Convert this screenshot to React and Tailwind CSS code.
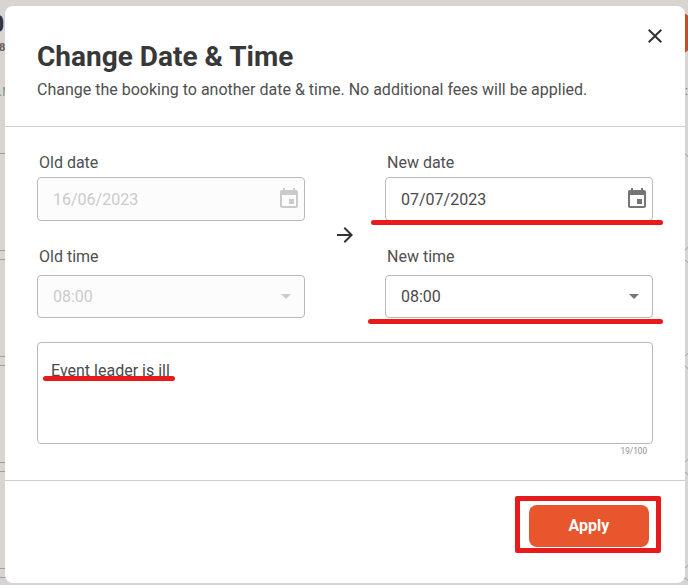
function CalendarIcon({ className }) {
  return (
    <svg viewBox="0 0 24 24" className={className} fill="currentColor">
      <path d="M17 12h-5v5h5v-5zM16 1v2H8V1H6v2H5c-1.11 0-1.99.9-1.99 2L3 19c0 1.1.89 2 2 2h14c1.1 0 2-.9 2-2V5c0-1.1-.9-2-2-2h-1V1h-2zm3 18H5V8h14v11z" />
    </svg>
  );
}

function CaretIcon({ className }) {
  return (
    <svg viewBox="0 0 10 5" className={className} fill="currentColor">
      <path d="M0 0h10L5 5z" />
    </svg>
  );
}

function DateField({ label, value, disabled }) {
  return (
    <div className="w-[268px]">
      <div className="pl-0.5 h-[30px] leading-[32px] text-[#4f4f4f]">{label}</div>
      <div
        className={
          "flex h-[44px] items-center justify-between rounded-[4px] border border-[#b9b9b9] pl-[15px] pr-[3px] " +
          (disabled ? "bg-[#fcfcfc] text-[#cbcbcb]" : "bg-white text-[#4a4a4a]")
        }
      >
        <span className="pt-0.5">{value}</span>
        <CalendarIcon className={disabled ? "size-6 text-[#cbcbcb]" : "size-6 text-[#757575]"} />
      </div>
    </div>
  );
}

function TimeField({ label, value, disabled }) {
  return (
    <div className="w-[268px]">
      <div className="pl-0.5 h-[34px] leading-[32px] text-[#4f4f4f]">{label}</div>
      <div
        className={
          "flex h-[43px] items-center justify-between rounded-[4px] border border-[#b9b9b9] pl-[15px] pr-[13px] " +
          (disabled ? "bg-[#fcfcfc] text-[#cbcbcb]" : "bg-white text-[#4a4a4a]")
        }
      >
        <span>{value}</span>
        <CaretIcon className={disabled ? "h-[5px] w-[10px] text-[#cbcbcb]" : "h-[5px] w-[10px] text-[#757575]"} />
      </div>
    </div>
  );
}

function PageBehind() {
  return (
    <div className="h-full w-[690px]">
      <div className="flex h-[153px] items-start justify-between">
        <div className="w-4">
          <div className="-ml-[9px] mt-[11px] h-[27px] text-[23px] font-bold leading-[28px] text-[#33303a]">0</div>
          <div className="h-[18px] -ml-[1px] text-[11px] font-bold leading-[20px] text-[#6b5b55]">8</div>
          <div className="-ml-[1px] mt-[27px] h-[18px] text-[12px] leading-[18px] text-[#6f9a96]">.M</div>
        </div>
        <div className="w-[14px]">
          <div className="mt-[13px] h-[40px] rounded-r-[8px] bg-[#c94e28]" />
          <div className="mt-[29px] pl-[9px] text-[12px] leading-[18px] text-[#77706e]">:</div>
        </div>
      </div>
      <div className="-ml-5 flex w-[710px] flex-col gap-2">
        {[0, 1, 2, 3, 4].map((row) => (
          <div key={row} className="h-[98px] shrink-0 rounded-[8px] border border-[#a39f9d]" />
        ))}
      </div>
    </div>
  );
}

export default function App() {
  return (
    <div className="relative h-[585px] w-[688px] overflow-hidden bg-[#d8d4d1] font-[Roboto,sans-serif] text-[16px]">
      <PageBehind />

      <div className="absolute left-[5px] top-[6px] flex h-[577px] w-[680px] flex-col rounded-[8px] bg-white">
        <header className="flex h-[121px] shrink-0 justify-between border-b border-[#cfcfcf] pl-8 pr-[18px]">
          <div className="pt-[32px]">
            <h1 className="text-[28px] font-bold leading-[37px] text-[#383838]">Change Date &amp; Time</h1>
            <p className="leading-[30px] text-[#4f4f4f]">
              Change the booking to another date &amp; time. No additional fees will be applied.
            </p>
          </div>
          <button className="mt-[18px] size-6 text-[#333]">
            <svg viewBox="0 0 24 24" fill="currentColor">
              <path d="M19 6.41L17.59 5 12 10.59 6.41 5 5 6.41 10.59 12 5 17.59 6.41 19 12 13.41 17.59 19 19 17.59 13.41 12 19 6.41z" />
            </svg>
          </button>
        </header>

        <main className="flex h-[354px] shrink-0 flex-col border-b border-[#cfcfcf] px-8 pt-5">
          <div className="flex items-center justify-between">
            <div className="flex flex-col gap-[20px]">
              <DateField label="Old date" value="16/06/2023" disabled />
              <TimeField label="Old time" value="08:00" disabled />
            </div>
            <svg viewBox="0 0 24 24" className="mt-[5px] size-6 text-[#333]" fill="currentColor">
              <path d="M12 4l-1.41 1.41L16.17 11H4v2h12.17l-5.58 5.59L12 20l8-8z" />
            </svg>
            <div className="flex flex-col gap-[20px]">
              <DateField label="New date" value="07/07/2023" />
              <TimeField label="New time" value="08:00" />
            </div>
          </div>
          <div className="mt-6 h-[102px] rounded-[4px] border border-[#b9b9b9] px-[13px] pt-[16px] leading-6 text-[#4a4a4a]">
            Event leader is ill
          </div>
          <div className="pr-1.5 text-right text-[8.2px] leading-[15px] text-[#8f8f8f]">19/100</div>
        </main>

        <footer className="flex flex-1 justify-end pr-9 pt-6">
          <button className="h-[42px] w-[120px] rounded-[8px] bg-[#e8562e] font-bold text-white">Apply</button>
        </footer>
      </div>

      <div className="absolute left-[371px] top-[220px] h-[5px] w-[292px] rounded-full bg-[#e71b1b]" />
      <div className="absolute left-[368px] top-[319px] h-[5px] w-[295px] rounded-full bg-[#e71b1b]" />
      <div className="absolute left-[43px] top-[376px] h-[5px] w-[132px] rounded-full bg-[#e71b1b]" />
      <div className="absolute left-[515px] top-[496px] h-[57px] w-[146px] rounded-[2px] border-[5px] border-[#e71b1b]" />
    </div>
  );
}
